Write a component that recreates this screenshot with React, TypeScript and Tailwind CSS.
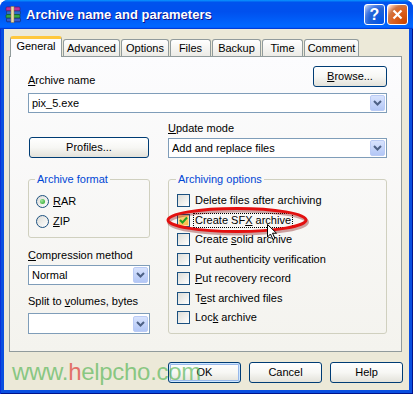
import React from "react";

const tabs: [string, number][] = [
  ["General", 52],
  ["Advanced", 57],
  ["Options", 48],
  ["Files", 41],
  ["Backup", 49],
  ["Time", 41],
  ["Comment", 55],
];

function DropArrow() {
  return (
    <div className="w-[15px] h-[16px] rounded-[2px] border border-[#BACBF5] bg-gradient-to-b from-[#D8E3FD] to-[#B3C7F6] flex items-center justify-center">
      <svg width="9" height="6" viewBox="0 0 9 6">
        <path d="M1 1 L4.5 4.5 L8 1" fill="none" stroke="#4D6185" strokeWidth="2" />
      </svg>
    </div>
  );
}

function Combo({ value, className = "" }: { value?: string; className?: string }) {
  return (
    <div className={`h-[20px] border border-[#7F9DB9] bg-white flex items-center pl-[3px] pr-[1px] ${className}`}>
      <span className="flex-1 truncate">{value}</span>
      <DropArrow />
    </div>
  );
}

function Btn({ children, className = "", def = false }: { children: React.ReactNode; className?: string; def?: boolean }) {
  return (
    <div
      className={`h-[21px] rounded-[3px] border border-[#003C74] bg-gradient-to-b from-white via-[#F7F7F4] to-[#E3E2DA] flex items-center justify-center ${
        def ? "shadow-[inset_0_0_0_1px_#CEE7FF,inset_0_0_0_2px_#98B8EA]" : ""
      } ${className}`}
    >
      {children}
    </div>
  );
}

function Check({ label, checked = false, focus = false }: { label: React.ReactNode; checked?: boolean; focus?: boolean }) {
  return (
    <div className="h-[19.5px] flex items-center gap-[4px]">
      <div
        className={`w-[13px] h-[13px] border border-[#1C5180] flex items-center justify-center ${
          checked
            ? "bg-gradient-to-br from-[#FDD889] to-[#F8B636] shadow-[inset_0_0_0_1px_#FEDF9C]"
            : "bg-gradient-to-br from-[#DCDCD7] to-white"
        }`}
      >
        {checked && (
          <svg width="9" height="9" viewBox="0 0 9 9">
            <path d="M1 4 L3.5 6.5 L8 1.5" fill="none" stroke="#21A121" strokeWidth="2" />
          </svg>
        )}
      </div>
      <span className={`px-[1px] leading-[13px] ${focus ? "outline outline-1 outline-dotted outline-black" : ""}`}>{label}</span>
    </div>
  );
}

function Radio({ label, on = false }: { label: React.ReactNode; on?: boolean }) {
  return (
    <div className="h-[20px] flex items-center gap-[4px]">
      <div className="w-[13px] h-[13px] rounded-full border border-[#1C5180] bg-gradient-to-br from-[#DCDCD7] to-white flex items-center justify-center">
        {on && <div className="w-[5px] h-[5px] rounded-full bg-[radial-gradient(circle_at_35%_35%,#A0E79E,#21A121)]" />}
      </div>
      <span>{label}</span>
    </div>
  );
}

export default function App() {
  return (
    <div className="relative w-[413px] h-[394px] flex flex-col rounded-t-[8px] overflow-hidden bg-[#0831D9] font-['Liberation_Sans',Arial,sans-serif] text-[11px] text-black leading-[13px]">
      {/* title bar */}
      <div className="h-[29px] flex items-center pl-[5px] pr-[5px] bg-[linear-gradient(180deg,#0997ff,#0053ee_8%,#0050ee_40%,#0066ff_88%,#0066ff_93%,#005bff_95%,#003dd7_96%,#003dd7)]">
        <svg width="17" height="17" viewBox="0 0 17 17" className="mr-[4px]">
          <rect x="1" y="1" width="14" height="4" rx="1" fill="#B8309C" stroke="#5A1050" strokeWidth="0.6" />
          <rect x="1.5" y="5" width="14" height="3.6" rx="1" fill="#2E6CC8" stroke="#123066" strokeWidth="0.6" />
          <rect x="1" y="8.6" width="14" height="3.6" rx="1" fill="#34A844" stroke="#0F4C18" strokeWidth="0.6" />
          <rect x="1.5" y="12.2" width="14" height="3.6" rx="1" fill="#3B5CC8" stroke="#102060" strokeWidth="0.6" />
          <rect x="6" y="0.5" width="3" height="16" fill="#E9D9A6" stroke="#8A7440" strokeWidth="0.5" />
        </svg>
        <span className="flex-1 font-bold text-[13px] text-white [text-shadow:1px_1px_#0f1089]">Archive name and parameters</span>
        <div className="flex gap-[2px]">
          <div className="w-[21px] h-[21px] rounded-[3px] border border-white bg-[radial-gradient(circle_at_90%_90%,#0054e9_0%,#2263d5_55%,#4479e4_70%,#a3bbec_90%,#fff_100%)] flex items-center justify-center text-white font-bold text-[16px]">
            ?
          </div>
          <div className="w-[21px] h-[21px] rounded-[3px] border border-white bg-[radial-gradient(circle_at_90%_90%,#cc4600_0%,#dc6527_55%,#cd7546_70%,#ffccb2_90%,#fff_100%)] flex items-center justify-center">
            <svg width="11" height="11" viewBox="0 0 11 11">
              <path d="M1.5 1.5 L9.5 9.5 M9.5 1.5 L1.5 9.5" stroke="white" strokeWidth="2.2" />
            </svg>
          </div>
        </div>
      </div>

      {/* frame + client */}
      <div className="flex-1 px-[4px] pb-[4px] bg-[#0A4FE0] shadow-[inset_1px_0_#0831d9,inset_-1px_0_#00138c,inset_0_-1px_#00138c]">
        <div className="h-full bg-[#ECE9D8] pt-[7px] pl-[5px]">
          {/* tabs */}
          <div className="flex items-end h-[21px] -mb-[1px] pl-[1px]">
            {tabs.map(([t, w], i) =>
              i === 0 ? (
                <div
                  key={t}
                  style={{ width: w }}
                  className="relative z-10 h-[21px] rounded-t-[3px] border-x border-[#919B9C] border-t-[3px] border-t-[#FFC83C] bg-[#FCFCFE] flex items-center justify-center pb-[4px]"
                >
                  {t}
                </div>
              ) : (
                <div
                  key={t}
                  style={{ width: w }}
                  className="ml-[1px] mb-[1px] h-[17px] rounded-t-[3px] border border-b-0 border-[#919B9C] bg-gradient-to-b from-white to-[#ECEBE6] flex items-center justify-center"
                >
                  {t}
                </div>
              )
            )}
          </div>

          {/* panel */}
          <div className="w-[393px] h-[296px] border border-[#919B9C] bg-gradient-to-b from-[#FCFCFE] to-[#F4F3EE] pl-[18px] pt-[9px]">
            <div className="w-[359px] flex items-end justify-between">
              <span>
                <u>A</u>rchive name
              </span>
              <Btn className="w-[74px] h-[20px]">
                <span>
                  <u>B</u>rowse...
                </span>
              </Btn>
            </div>
            <Combo value="pix_5.exe" className="w-[359px] mt-[6px]" />

            <div className="grid grid-cols-[122px_219px] gap-x-[18px]">
              <div className="flex items-end">
                <Btn className="w-[120px] ml-[1px]">Profiles...</Btn>
              </div>
              <div className="pt-[9px]">
                <div>
                  <u>U</u>pdate mode
                </div>
                <Combo value="Add and replace files" className="mt-[3px]" />
              </div>

              <div className="mt-[15px]">
                <fieldset className="border border-[#D0D0BF] rounded-[3px] pl-[7px] pt-[5px] pb-[6px]">
                  <legend className="text-[#0046D5] px-[2px] -ml-[1px]">Archive format</legend>
                  <Radio on label={<><u>R</u>AR</>} />
                  <Radio label={<><u>Z</u>IP</>} />
                </fieldset>
                <div className="mt-[11px]">
                  <u>C</u>ompression method
                </div>
                <Combo value="Normal" className="mt-[3px]" />
                <div className="mt-[10px]">
                  Split to <u>v</u>olumes, bytes
                </div>
                <Combo className="mt-[5px] h-[21px]" />
              </div>

              <div className="mt-[15px]">
                <fieldset className="border border-[#D0D0BF] rounded-[3px] pl-[8px] pt-[5px] pb-[5.5px]">
                  <legend className="text-[#0046D5] px-[2px] -ml-[1px]">Archiving options</legend>
                  <Check label="Delete files after archiving" />
                  <Check checked focus label={<>Create SF<u>X</u> archive</>} />
                  <Check label={<>Create <u>s</u>olid archive</>} />
                  <Check label="Put authenticity verification" />
                  <Check label={<><u>P</u>ut recovery record</>} />
                  <Check label={<>T<u>e</u>st archived files</>} />
                  <Check label={<>Loc<u>k</u> archive</>} />
                </fieldset>
              </div>
            </div>
          </div>

          {/* buttons */}
          <div className="mt-[10px] flex justify-end gap-[8px] pr-[6px]">
            <Btn def className="w-[73px]">OK</Btn>
            <Btn className="w-[73px]">Cancel</Btn>
            <Btn className="w-[73px]">Help</Btn>
          </div>
        </div>
      </div>

      {/* red highlight ellipse */}
      <svg className="absolute left-[163px] top-[204px] pointer-events-none" width="150" height="32" viewBox="0 0 150 32">
        <ellipse cx="74" cy="16.5" rx="69" ry="11.5" fill="none" stroke="#7A0000" strokeOpacity="0.35" strokeWidth="4" transform="translate(1 1.5)" />
        <ellipse cx="74" cy="16" rx="69" ry="11.5" fill="none" stroke="#E31010" strokeWidth="3" />
      </svg>

      {/* mouse cursor */}
      <svg className="absolute left-[267px] top-[224px]" width="12" height="17" viewBox="0 0 12 17">
        <path d="M0.5 0.5 L0.5 13 L3.5 10 L6 15.5 L8 14.5 L5.5 9.2 L9.5 9.2 Z" fill="white" stroke="black" strokeWidth="1" />
      </svg>

      {/* watermark */}
      <div className="absolute left-[12px] top-[360px] text-[24px] leading-none tracking-[-0.3px] text-[#5cb85c]/70 pointer-events-none">
        www.<span className="text-[#e0504a]/80">h</span>elpcho.com
      </div>
    </div>
  );
}
